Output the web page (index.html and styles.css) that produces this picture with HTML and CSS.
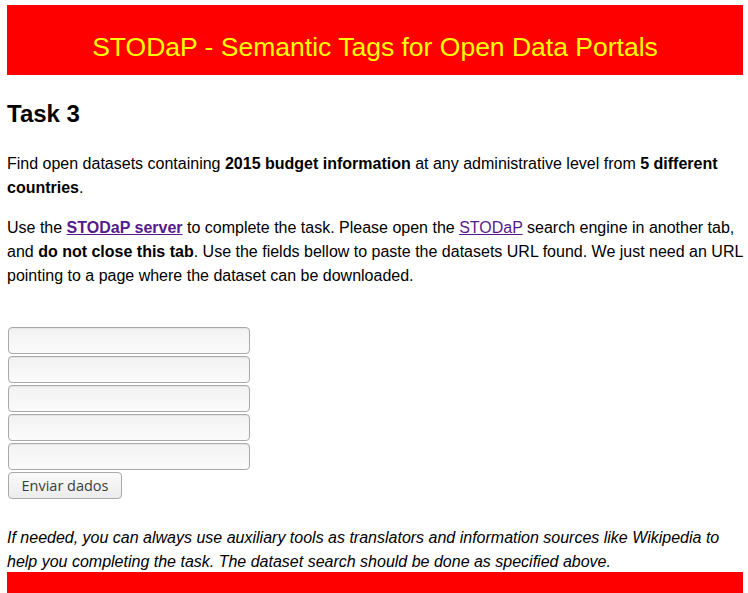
FILE: index.html
```html
<!DOCTYPE html>
<html>
<head>
<meta charset="utf-8">
<link rel="stylesheet" href="styles.css">
</head>
<body>
<div class="page">
  <header class="banner">
    <h1 class="banner-title">STODaP - Semantic Tags for Open Data Portals</h1>
  </header>
  <main class="content">
    <h2 class="task-title">Task 3</h2>
    <p class="text first">Find open datasets containing <b>2015 budget information</b> at any administrative level from <b>5 different countries</b>.</p>
    <p class="text">Use the <a class="link" href="#"><b>STODaP server</b></a> to complete the task. Please open the <a class="link" href="#">STODaP</a> search engine in another tab, and <b>do not close this tab</b>. Use the fields bellow to paste the datasets URL found. We just need an URL pointing to a page where the dataset can be downloaded.</p>
    <form class="url-form">
      <input class="url-input" type="text">
      <input class="url-input" type="text">
      <input class="url-input" type="text">
      <input class="url-input" type="text">
      <input class="url-input" type="text">
      <button class="submit-btn" type="button">Enviar dados</button>
    </form>
    <p class="text note">If needed, you can always use auxiliary tools as translators and information sources like Wikipedia to help you completing the task. The dataset search should be done as specified above.</p>
  </main>
  <footer class="footer-bar"></footer>
</div>
</body>
</html>
```

FILE: styles.css
```css
html, body {
  margin: 0;
  padding: 0;
  background: #fff;
}
body {
  padding: 5px 5px 0 7px;
  font-family: "Liberation Sans", Arial, sans-serif;
  color: #000;
}
.page {
  display: flex;
  flex-direction: column;
}
.banner {
  background: #ff0000;
  height: 70px;
  display: flex;
  justify-content: center;
  align-items: center;
}
.banner-title {
  margin: 14px 0 0 0;
  font-weight: normal;
  font-size: 26.5px;
  color: #ffff00;
}
.content {
  display: flex;
  flex-direction: column;
}
.task-title {
  margin: 26px 0 0 0;
  font-size: 24px;
  line-height: 26px;
  font-weight: bold;
}
.text {
  margin: 16px 0 0 0;
  font-size: 16px;
  line-height: 24px;
}
.text.first {
  margin-top: 25px;
}
.link {
  color: #551a8b;
  text-decoration: underline;
}
.url-form {
  margin-top: 39px;
  display: flex;
  flex-direction: column;
  align-items: flex-start;
  gap: 2px;
  padding-left: 1px;
}
.url-input {
  box-sizing: border-box;
  width: 242px;
  height: 27px;
  margin: 0;
  border: 1px solid #a9a9a9;
  border-radius: 4px;
  background: linear-gradient(#f2f2f2, #fbfbfb);
  box-shadow: inset 0 1px 1px rgba(0,0,0,0.06);
}
.submit-btn {
  box-sizing: border-box;
  width: 114px;
  height: 27px;
  margin: 0;
  border: 1px solid #a9a9a9;
  border-radius: 4px;
  background: linear-gradient(#fafafa, #ececec);
  font-family: "Open Sans", "DejaVu Sans", sans-serif;
  font-size: 14.5px;
  color: #3c3c3c;
  padding: 0;
}
.text.note {
  margin-top: 27px;
  font-style: italic;
}
.footer-bar {
  background: #ff0000;
  height: 23px;
  margin-top: -2px;
}
```
